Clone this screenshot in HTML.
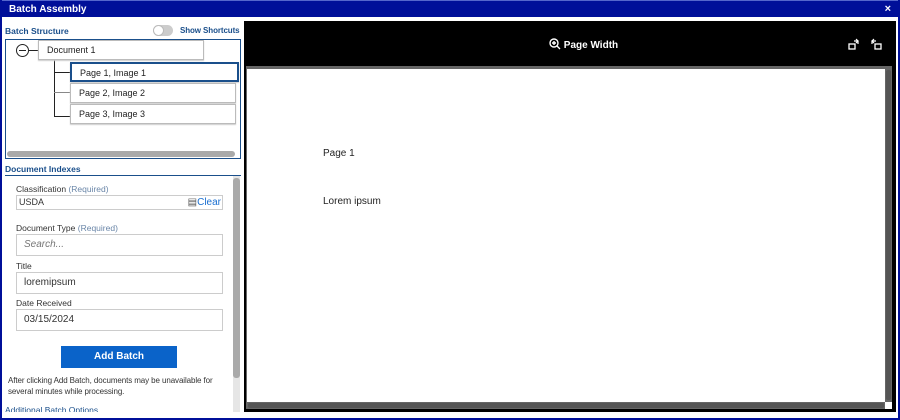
<!DOCTYPE html>
<html><head><style>
*{box-sizing:border-box;margin:0;padding:0}
body{width:900px;height:420px;overflow:hidden;background:#fff;font-family:"Liberation Sans",sans-serif;position:relative}
.abs{position:absolute}
.frame{left:0;top:0;width:900px;height:420px;border:2px solid #000f99;border-top:none}
.hdr{left:0;top:0;width:900px;height:17px;background:#000f99;color:#fff;font-weight:bold;font-size:10px;line-height:17px;padding-left:8px;border:1px solid #5566cc;border-bottom:none}
.lbl{color:#1a4f8b;font-size:8.5px;font-weight:bold}
.node{background:#fff;border:1px solid #bbb;box-shadow:0 1px 1px #ccc;font-size:9px;color:#222;padding-left:8px;line-height:18px;height:20px}
.field{font-size:8.5px;color:#333}
.inp{border:1px solid #ccc;background:#fff;font-size:10px;color:#333;padding-left:7px}
</style></head><body>
<div class="abs hdr">Batch Assembly<span style="position:absolute;right:8px;top:0;font-size:11px">×</span></div>
<div class="abs frame"></div>

<div class="abs lbl" style="left:5px;top:26px">Batch Structure</div>
<div class="abs" style="left:153px;top:25px;width:20px;height:11px;border-radius:6px;background:#ccc"></div>
<div class="abs" style="left:153px;top:25px;width:11px;height:11px;border-radius:6px;background:#fff;border:1px solid #bbb"></div>
<div class="abs lbl" style="left:180px;top:26px;font-size:8px;letter-spacing:-0.1px">Show Shortcuts</div>

<div class="abs" style="left:5px;top:39px;width:236px;height:120px;border:1px solid #1a4f8b"></div>
<div class="abs" style="left:16px;top:44px;width:13px;height:13px;border:1px solid #222;border-radius:50%"></div>
<div class="abs" style="left:19px;top:50px;width:7px;height:1px;background:#222"></div>
<div class="abs" style="left:29px;top:50px;width:10px;height:1px;background:#222"></div>
<div class="abs" style="left:54px;top:58px;width:1px;height:59px;background:#222"></div>
<div class="abs" style="left:54px;top:72px;width:16px;height:1px;background:#222"></div>
<div class="abs" style="left:54px;top:92px;width:16px;height:1px;background:#888"></div>
<div class="abs" style="left:54px;top:116px;width:16px;height:1px;background:#222"></div>
<div class="abs node" style="left:38px;top:40px;width:166px">Document 1</div>
<div class="abs node" style="left:70px;top:62px;width:169px;border:2px solid #1a4f8b">Page 1, Image 1</div>
<div class="abs node" style="left:70px;top:83px;width:166px">Page 2, Image 2</div>
<div class="abs node" style="left:70px;top:104px;width:166px">Page 3, Image 3</div>
<div class="abs" style="left:7px;top:151px;width:228px;height:6px;border-radius:3px;background:#aaa"></div>

<div class="abs lbl" style="left:5px;top:164px">Document Indexes</div>
<div class="abs" style="left:5px;top:175px;width:236px;height:1px;background:#1a4f8b"></div>
<div class="abs" style="left:233px;top:176px;width:7px;height:236px;background:#e6e6e6"></div>
<div class="abs" style="left:233px;top:178px;width:7px;height:200px;border-radius:3px;background:#aaa"></div>

<div class="abs field" style="left:16px;top:184px">Classification <span style="color:#6a86a8">(Required)</span></div>
<div class="abs inp" style="left:16px;top:195px;width:207px;height:15px;font-size:9px;line-height:13px;padding-left:2px">USDA<span style="position:absolute;right:1px;top:0;color:#1a6fd0;font-size:10px"><span style="color:#555">▤</span>Clear</span></div>
<div class="abs field" style="left:16px;top:223px">Document Type <span style="color:#6a86a8">(Required)</span></div>
<div class="abs inp" style="left:16px;top:234px;width:207px;height:22px;line-height:20px;font-style:italic;color:#777">Search...</div>
<div class="abs field" style="left:16px;top:261px">Title</div>
<div class="abs inp" style="left:16px;top:272px;width:207px;height:22px;line-height:20px">loremipsum</div>
<div class="abs field" style="left:16px;top:298px">Date Received</div>
<div class="abs inp" style="left:16px;top:309px;width:207px;height:22px;line-height:20px">03/15/2024</div>
<div class="abs" style="left:61px;top:346px;width:116px;height:22px;background:#0a63c9;color:#fff;font-weight:bold;font-size:10px;text-align:center;line-height:22px">Add Batch</div>
<div class="abs" style="left:8px;top:375px;font-size:8px;color:#333;line-height:11px;width:228px;letter-spacing:-0.1px">After clicking Add Batch, documents may be unavailable for several minutes while processing.</div>
<div class="abs lbl" style="left:5px;top:405px;font-weight:normal;color:#1a4f8b">Additional Batch Options</div>
<div class="abs" style="left:2px;top:412px;width:240px;height:8px;background:#fff"></div>
<div class="abs" style="left:0;top:412px;width:900px;height:8px;border:2px solid #000f99;border-top:none;background:transparent"></div>

<div class="abs" style="left:244px;top:21px;width:652px;height:391px;background:#000"></div>
<div class="abs" style="left:549px;top:38px;color:#fff;font-weight:bold;font-size:10px">
<svg width="12" height="12" viewBox="0 0 12 12" style="vertical-align:-2px"><circle cx="5" cy="5" r="4" fill="none" stroke="#fff" stroke-width="1.4"/><path d="M8 8L11 11M3 5H7M5 3V7" stroke="#fff" stroke-width="1.4"/></svg> Page Width</div>
<svg class="abs" style="left:848px;top:38px" width="12" height="12" viewBox="0 0 12 12"><rect x="1" y="6" width="6" height="5" fill="none" stroke="#fff" stroke-width="1.3"/><path d="M6 3H10V6M8 1L10 3L8 5" fill="none" stroke="#fff" stroke-width="1.2"/></svg>
<svg class="abs" style="left:870px;top:38px" width="12" height="12" viewBox="0 0 12 12"><rect x="5" y="6" width="6" height="5" fill="none" stroke="#fff" stroke-width="1.3"/><path d="M6 3H2V6M4 1L2 3L4 5" fill="none" stroke="#fff" stroke-width="1.2"/></svg>
<div class="abs" style="left:246px;top:66px;width:646px;height:343px;background:#666"></div>
<div class="abs" style="left:247px;top:69px;width:638px;height:333px;background:#fff"></div>
<div class="abs" style="left:886px;top:70px;width:5px;height:330px;background:#555;border-radius:2px"></div>
<div class="abs" style="left:248px;top:403px;width:636px;height:5px;background:#555;border-radius:2px"></div>
<div class="abs" style="left:885px;top:402px;width:7px;height:7px;background:#fff"></div>
<div class="abs" style="left:323px;top:148px;font-size:10px;color:#222">Page 1</div>
<div class="abs" style="left:323px;top:196px;font-size:10px;color:#222">Lorem ipsum</div>
</body></html>
